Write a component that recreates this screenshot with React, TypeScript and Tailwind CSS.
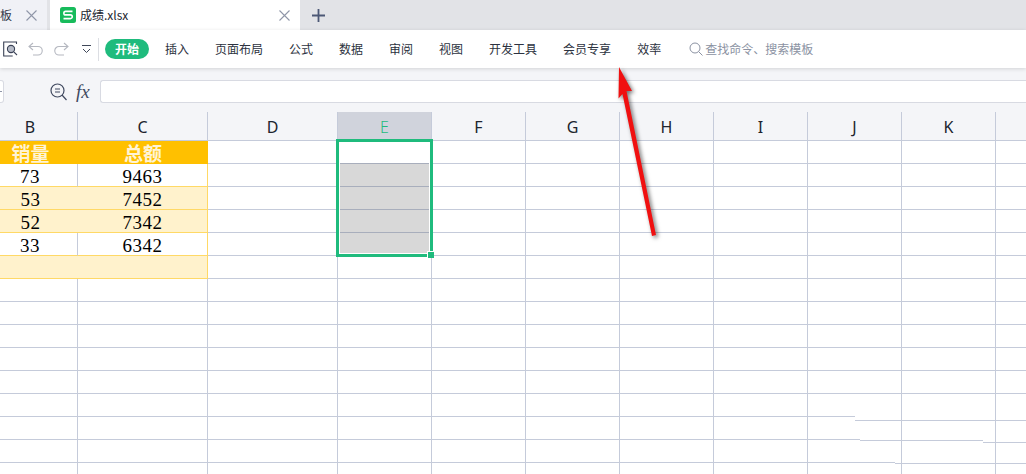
const cjk = "font-['Noto_Sans_CJK_SC','Noto_Sans',sans-serif]";
const num = "font-['Liberation_Serif',serif] text-[19px] tracking-[0.5px] text-black";

const menus = ["插入", "页面布局", "公式", "数据", "审阅", "视图", "开发工具", "会员专享", "效率"];
const letters = ["B", "C", "D", "E", "F", "G", "H", "I", "J", "K", ""];

const dataRows = [
  { b: "73", c: "9463", fill: false },
  { b: "53", c: "7452", fill: true },
  { b: "52", c: "7342", fill: true },
  { b: "33", c: "6342", fill: false },
  { b: "", c: "", fill: true },
];

function Close({ className }: { className: string }) {
  return (
    <svg width="11" height="11" viewBox="0 0 11 11" className={className}>
      <path d="M.5.5l10 10M10.500.5l-10 10" stroke="#8f96a8" strokeWidth="1.1" fill="none" />
    </svg>
  );
}

function TabBar() {
  return (
    <div className={`flex h-[30px] shrink-0 bg-[#e2e3e7] ${cjk}`}>
      <div className="flex w-[47px] items-center bg-[#f0f1f6]">
        <span className="text-[12px] leading-none text-[#333a4a]">板</span>
        <Close className="ml-[14px]" />
      </div>
      <div className="ml-[3px] flex w-[250px] items-center bg-white pl-[10px]">
        <svg width="16" height="16" viewBox="0 0 16 16">
          <rect width="16" height="16" rx="2.5" fill="#17bb5b" />
          <path d="M12.500 4.400H5.600a1.700 1.700 0 0 0 0 3.500h4.800a1.800 1.800 0 0 1 0 3.700H3.500" stroke="#fff" strokeWidth="1.6" fill="none" />
        </svg>
        <span className="ml-[4px] text-[12px] leading-none text-[#20242e]">成绩.xlsx</span>
        <Close className="ml-[151px]" />
      </div>
      <div className="flex w-[36px] items-center justify-center">
        <svg width="13" height="13" viewBox="0 0 13 13">
          <path d="M6.500 0v13M0 6.500h13" stroke="#4c5876" strokeWidth="1.8" />
        </svg>
      </div>
    </div>
  );
}

function Toolbar() {
  return (
    <div className={`relative z-10 flex h-[38px] shrink-0 items-center bg-white shadow-[0_1px_4px_rgba(0,0,0,0.14)] ${cjk}`}>
      <svg width="15" height="16" viewBox="0 0 15 16" className="ml-[3px]">
        <path d="M13.500 3V1H.7v14h9" stroke="#3a4256" strokeWidth="1.1" fill="none" />
        <circle cx="8" cy="8" r="3.600" fill="#b7bcc8" stroke="#3a4256" strokeWidth="1.1" />
        <path d="M10.800 10.800l3.200 3.200" stroke="#3a4256" strokeWidth="1.1" />
      </svg>
      <svg width="15" height="14" viewBox="0 0 15 14" className="ml-[10px]">
        <path d="M5 1L1 4.500 5 8M1 4.500h9a4 4 0 0 1 0 8.500H5" stroke="#b5b8c0" strokeWidth="1.1" fill="none" />
      </svg>
      <svg width="15" height="14" viewBox="0 0 15 14" className="ml-[11px]">
        <path d="M10 1l4 3.500L10 8M14 4.500H5a4 4 0 0 0 0 8.500h5" stroke="#b5b8c0" strokeWidth="1.1" fill="none" />
      </svg>
      <svg width="9" height="9" viewBox="0 0 9 9" className="ml-[13px]">
        <path d="M0 .5h9M1 4l3.500 3.500L8 4" stroke="#3f4759" strokeWidth="1" fill="none" />
      </svg>
      <div className="ml-[7px] h-[23px] w-px bg-[#dcdee3]" />
      <div className="ml-[6px] flex h-[20px] w-[44px] items-center justify-center rounded-full bg-[#1fbb7d] text-[12px] font-bold leading-none text-white">
        开始
      </div>
      <div className="ml-[16px] flex items-center gap-[26px] text-[12px] leading-none text-[#2c3240]">
        {menus.map((m) => (
          <span key={m}>{m}</span>
        ))}
      </div>
      <div className="ml-[28px] flex items-center gap-[2px] text-[12px] leading-none text-[#8b92a2]">
        <svg width="14" height="14" viewBox="0 0 14 14">
          <circle cx="6" cy="6" r="5" stroke="#8b92a2" strokeWidth="1" fill="none" />
          <path d="M9.700 9.700L13.500 13.500" stroke="#8b92a2" strokeWidth="1" />
        </svg>
        <span>查找命令、搜索模板</span>
      </div>
    </div>
  );
}

function FormulaBar() {
  return (
    <div className="flex h-[44px] shrink-0 items-center bg-[#f4f5f8] pt-[3px]">
      <div className="flex h-[23px] w-[4px] items-center rounded-r-[3px] border border-l-0 border-[#d8dae2] bg-white">
        <div className="h-px w-[2px] bg-[#8f96a8]" />
      </div>
      <svg width="17" height="18" viewBox="0 0 17 18" className="ml-[46px]">
        <circle cx="7.500" cy="7.500" r="6.500" stroke="#414a60" strokeWidth="1.200" fill="none" />
        <path d="M5 6h5M5 9h5M12 12l4.500 5" stroke="#414a60" strokeWidth="1.200" fill="none" />
      </svg>
      <span className="ml-[9px] w-[24px] font-['Liberation_Serif',serif] text-[19px] italic leading-none text-[#414a60]">fx</span>
      <div className="h-[23px] flex-1 rounded-l-[3px] border border-r-0 border-[#d8dae2] bg-white" />
    </div>
  );
}

function Cell({ className = "", children }: { className?: string; children?: React.ReactNode }) {
  return (
    <div className={`flex h-[23px] items-center justify-center border-r border-b border-[#c5cbda] bg-white ${className}`}>
      {children}
    </div>
  );
}

function Sheet() {
  return (
    <div className="relative flex-1 overflow-hidden">
      <div className="relative -ml-[17px] grid w-[1100px] grid-cols-[95px_130px_130px_94px_94px_94px_94px_94px_94px_94px_94px_94px]">
        {letters.map((l) => (
          <div
            key={l}
            className={`flex h-[29px] items-center justify-center border-r border-b border-[#c5cbda] pt-px font-['Noto_Sans',sans-serif] text-[16px] leading-none ${
              l === "E" ? "bg-[#d0d3dc] font-light text-[#1fbb7d]" : "bg-[#f4f5f8] text-[#20242e]"
            }`}
          >
            {l}
          </div>
        ))}
        <div className="h-[29px] border-b border-[#c5cbda] bg-[#f4f5f8]" />

        <Cell className={`col-span-2 !justify-start !border-[#ffc000] !bg-[#ffc000] ${cjk}`}>
          <div className="grid w-full grid-cols-[95px_130px] text-center text-[19px] font-bold leading-none text-[#fff4d6]">
            <span>销量</span>
            <span>总额</span>
          </div>
        </Cell>
        {letters.slice(1).map((l) => (
          <Cell key={l} />
        ))}

        {dataRows.map((row) => (
          <div key={row.c + row.b} className="col-span-full grid grid-cols-subgrid">
            {row.fill ? (
              <div className={`col-span-2 grid h-[23px] grid-cols-subgrid border-r border-b border-[#ffd966] bg-[#fff2cc] pt-[2px] leading-[22px] ${num}`}>
                <span className="text-center">{row.b}</span>
                <span className="text-center">{row.c}</span>
              </div>
            ) : (
              <>
                <Cell className={`!border-b-[#ffd966] pt-[2px] leading-none ${num}`}>{row.b}</Cell>
                <Cell className={`!border-r-[#ffd966] !border-b-[#ffd966] pt-[2px] leading-none ${num}`}>{row.c}</Cell>
              </>
            )}
            {letters.slice(1).map((l) => (
              <Cell key={l} />
            ))}
          </div>
        ))}

        {Array.from({ length: 9 }).map((_, r) => (
          <div key={r} className="col-span-full grid grid-cols-subgrid">
            {letters.map((l) => (
              <Cell key={l} />
            ))}
            <Cell />
          </div>
        ))}

        {/* selection E1:E5 */}
        <div className="absolute top-[27px] left-[353px] h-[118px] w-[97px] border-[3px] border-[#1fbb7d] bg-white pt-[21px] pr-px pb-px pl-px">
          <div className="flex h-full flex-col bg-[#d8d8d8]">
            <div className="h-[23px] border-t border-[#a8aebc]" />
            <div className="h-[23px] border-t border-[#a8aebc]" />
            <div className="h-[23px] border-t border-[#a8aebc]" />
            <div className="flex-1 border-t border-[#a8aebc]" />
          </div>
          <div className="absolute -right-[4px] -bottom-[4px] h-[7px] w-[7px] border-t border-l border-white bg-[#1fbb7d]" />
        </div>
      </div>

      {/* the row lines shift slightly in the bottom right corner */}
      <svg width="1026" height="362" className="pointer-events-none absolute top-0 left-0">
        <g stroke="#fff" strokeWidth="1">
          <path d="M855 304.500H1026M860 327.500H1026M895 350.500H1026" />
        </g>
        <g stroke="#c5cbda" strokeWidth="1">
          <path d="M855 308.500H1026M860 328.500H983M983 330.500H1026M895 351.500H1026" />
          <path d="M901.500 300V362M995.500 300V362" />
        </g>
      </svg>
    </div>
  );
}

export default function App() {
  return (
    <div className="relative flex h-[474px] w-[1026px] flex-col overflow-hidden bg-white">
      <TabBar />
      <Toolbar />
      <FormulaBar />
      <Sheet />
      <svg
        width="60"
        height="190"
        viewBox="610 60 60 190"
        className="absolute top-[60px] left-[610px] z-20 drop-shadow-[2px_2px_2px_rgba(0,0,0,0.55)]"
      >
        <path d="M619 67L632 91 626.500 91 656 235 652 236 622.500 94 618.500 98.500Z" fill="#f01010" />
      </svg>
    </div>
  );
}
